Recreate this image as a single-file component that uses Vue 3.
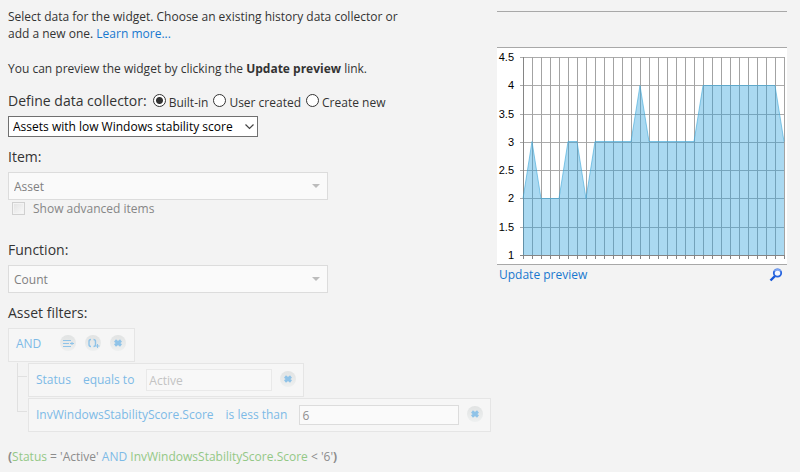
<script setup>
import { ref } from 'vue'

const source = ref('built-in')
const sources = [
  { id: 'built-in', label: 'Built-in' },
  { id: 'user', label: 'User created' },
  { id: 'new', label: 'Create new' },
]
const collector = ref('Assets with low Windows stability score')

const filters = [
  { field: 'Status', operator: 'equals to', value: 'Active', kind: 'pick' },
  { field: 'InvWindowsStabilityScore.Score', operator: 'is less than', value: '6', kind: 'entry' },
]

const values = [
  2, 3, 2, 2, 2, 3, 3, 2, 3, 3, 3, 3, 3, 4, 3,
  3, 3, 3, 3, 3, 4, 4, 4, 4, 4, 4, 4, 4, 4, 3,
]
const left = 26
const step = 9
const rows = [
  { label: '4.5', y: 9 },
  { label: '4', y: 37 },
  { label: '3.5', y: 66 },
  { label: '3', y: 94 },
  { label: '2.5', y: 122 },
  { label: '2', y: 150 },
  { label: '1.5', y: 179 },
  { label: '1', y: 207 },
]
const right = left + step * (values.length - 1)
const top = rows[0].y
const bottom = rows[rows.length - 1].y
const levelY = { 2: 150.5, 3: 93.5, 4: 37.5 }
const line = values.map((v, i) => `${left + i * step},${levelY[v]}`).join(' ')
const area = `${left},${bottom} ${line} ${right},${bottom}`
</script>

<template>
  <main class="page">
    <form class="settings" @submit.prevent>
      <p class="intro">
        Select data for the widget. Choose an existing history data collector or<br />
        add a new one. <a href="#">Learn more...</a>
      </p>
      <p class="intro">You can preview the widget by clicking the <b>Update preview</b> link.</p>

      <div class="sources" role="radiogroup" aria-labelledby="source-title">
        <span id="source-title" class="title">Define data collector:</span>
        <label v-for="s in sources" :key="s.id" class="radio">
          <input v-model="source" type="radio" name="source" :value="s.id" />
          <span>{{ s.label }}</span>
        </label>
      </div>
      <div class="picker collector">
        <select v-model="collector" aria-labelledby="source-title">
          <option>Assets with low Windows stability score</option>
        </select>
        <svg width="9" height="6" viewBox="0 0 9 6"><path d="M0.5 0.5 4.5 4.5 8.5 0.5" fill="none" stroke="#444" stroke-width="1.2" /></svg>
      </div>

      <label class="title" for="item">Item:</label>
      <div class="picker wide">
        <select id="item" disabled><option>Asset</option></select>
        <svg width="8" height="4" viewBox="0 0 8 4"><path d="M0 0h8L4 4z" fill="#bcbcbc" /></svg>
      </div>
      <label class="advanced">
        <input type="checkbox" disabled />
        <span>Show advanced items</span>
      </label>

      <label class="title" for="function">Function:</label>
      <div class="picker wide">
        <select id="function" disabled><option>Count</option></select>
        <svg width="8" height="4" viewBox="0 0 8 4"><path d="M0 0h8L4 4z" fill="#bcbcbc" /></svg>
      </div>

      <h2 class="title">Asset filters:</h2>
      <div class="box root">
        <a href="#" class="and">AND</a>
        <button type="button" class="round" aria-label="Add condition">
          <svg width="16" height="16" viewBox="0 0 16 16" fill="none" stroke="#8fc3e8" stroke-width="1">
            <path d="M3 5.5h8M3 8.5h6M3 11.5h8M10 8.5h4M12 7v3" />
          </svg>
        </button>
        <button type="button" class="round" aria-label="Add group">
          <svg width="16" height="16" viewBox="0 0 16 16" fill="none" stroke="#8fc3e8" stroke-width="1.4">
            <path d="M6 4.500Q4 4.500 4 6.500v3Q4 11.500 6 11.500M8.500 4.500Q10.500 4.500 10.500 6.500v3Q10.500 11.500 8.500 11.500" />
            <path d="M12.500 9v4M10.500 11h4" stroke-width="1" />
          </svg>
        </button>
        <button type="button" class="round" aria-label="Remove group">
          <svg width="16" height="16" viewBox="0 0 16 16"><path d="M5 5.500l6 5M11 5.500l-6 5" stroke="#8fc3e8" stroke-width="3" /></svg>
        </button>
      </div>
      <ul class="tree">
        <li v-for="f in filters" :key="f.field">
          <span class="branch"></span>
          <div class="box">
            <a href="#">{{ f.field }}</a>
            <a href="#">{{ f.operator }}</a>
            <input type="text" :class="f.kind" :value="f.value" :aria-label="f.field" disabled />
            <button type="button" class="round" aria-label="Remove condition">
              <svg width="16" height="16" viewBox="0 0 16 16"><path d="M5 5.500l6 5M11 5.500l-6 5" stroke="#8fc3e8" stroke-width="3" /></svg>
            </button>
          </div>
        </li>
      </ul>
      <p class="formula"><b>(</b><i>Status</i> = 'Active' <em>AND</em> <i>InvWindowsStabilityScore.Score</i> &lt; '6'<b>)</b></p>
    </form>

    <section class="preview">
      <header></header>
      <svg class="chart" viewBox="0 0 290 216" role="img" aria-label="Widget preview chart">
        <g shape-rendering="crispEdges" stroke-width="1">
          <path v-for="r in rows" :key="r.label" :d="`M${left - 3} ${r.y + 0.5}H${right + 1}`" stroke="#ababab" />
          <path v-for="(v, i) in values" :key="i" :d="`M${left + i * step + 0.5} ${top}V${bottom + 4}`" stroke="#a3a3a3" />
          <path :d="`M${left + 0.5} ${top}V${bottom + 4}M${left - 3} ${bottom + 0.5}H${right + 1}`" stroke="#858585" />
          <path v-for="(v, i) in values" :key="`t${i}`" :d="`M${left + i * step + 0.5} ${bottom}v4`" stroke="#858585" />
        </g>
        <polygon :points="area" fill="#2a9fdb" fill-opacity="0.4" />
        <polyline :points="line" fill="none" stroke="#3fa9d8" stroke-opacity="0.6" />
        <text v-for="r in rows" :key="`l${r.label}`" x="17" :y="r.y + 4" text-anchor="end">{{ r.label }}</text>
      </svg>
      <footer>
        <a href="#">Update preview</a>
        <a href="#" aria-label="Zoom preview" class="lens">
          <svg width="14" height="14" viewBox="0 0 14 14" fill="none">
            <path d="M6 8 1.500 12.500" stroke="#1557d8" stroke-width="2.400" />
            <circle cx="8.500" cy="5" r="3.700" fill="#f3f7ff" stroke="#2563de" stroke-width="1.800" />
            <path d="M5.500 3.200a3.700 3.700 0 0 1 6 0" stroke="#7da5f2" stroke-width="1.800" />
          </svg>
        </a>
      </footer>
    </section>
  </main>
</template>

<style>
body {
  margin: 0;
  background: #f3f3f3;
}
</style>

<style scoped>
.page {
  display: grid;
  grid-template-columns: minmax(0, 1fr) 290px;
  gap: 6px;
  align-items: start;
  padding: 8px 13px 6px 8px;
  font: 12px/17px "Open Sans", sans-serif;
  color: #333;
}
a {
  color: #1878cf;
  text-decoration: none;
}
.settings {
  display: flex;
  flex-direction: column;
  align-items: flex-start;
}
.intro {
  margin: 0 0 18px;
}
.title {
  margin: 0;
  font-size: 14px;
  font-weight: 400;
  line-height: 20px;
}
.sources {
  display: flex;
  align-items: center;
  margin-top: -9px;
  height: 29px;
  padding-bottom: 1px;
}
.sources .title {
  margin-right: 1px;
}
.radio {
  display: flex;
  align-items: center;
  gap: 3px;
  margin-left: 5px;
}
.radio span {
  padding-top: 3px;
}
.radio input {
  appearance: none;
  box-sizing: border-box;
  width: 13px;
  height: 13px;
  margin: 0;
  border: 1px solid #333;
  border-radius: 50%;
  background: #fff;
}
.radio input:checked {
  background: radial-gradient(circle, #333 3px, #fff 4px);
}
.picker {
  display: grid;
  align-items: center;
}
.picker select,
.picker svg {
  grid-area: 1 / 1;
}
.picker svg {
  justify-self: end;
  pointer-events: none;
}
.picker select {
  appearance: none;
  box-sizing: border-box;
  width: 100%;
  margin: 0;
  border-radius: 0;
  font: inherit;
}
.collector {
  width: 250px;
  margin-bottom: 10px;
}
.collector select {
  height: 21px;
  padding: 0 4px;
  border: 1px solid #707070;
  background: #fff;
  color: #000;
}
.collector svg {
  margin-right: 4px;
}
.wide {
  width: 320px;
  margin-top: 5px;
}
.wide select {
  height: 28px;
  padding: 0 5px;
  border: 1px solid #dcdcdc;
  background: #fafafa;
  color: #808080;
  opacity: 1;
}
.wide svg {
  margin-right: 8px;
}
.advanced {
  display: flex;
  align-items: center;
  gap: 8px;
  margin: 0 0 23px 4px;
  color: #868686;
}
.advanced input {
  appearance: none;
  box-sizing: border-box;
  width: 13px;
  height: 13px;
  margin: 0;
  padding: 1px;
  border: 1px solid #d0d0d0;
  background: linear-gradient(135deg, #e4e4e4, #f7f7f7) content-box #f7f7f7;
}
h2.title {
  margin: 10px 0 5px;
}
.box {
  display: flex;
  align-items: center;
  box-sizing: border-box;
  height: 34px;
  padding: 0 7px;
  border: 1px solid #e5e5e5;
  background: #f6f6f6;
  white-space: nowrap;
}
.box a {
  margin: 0 12px 2px 0;
  color: #7dbae6;
}
.root {
  gap: 9px;
  padding: 0 8px 2px 7px;
}
.box .and {
  margin-right: 10px;
}
.round {
  display: grid;
  flex: none;
  width: 16px;
  height: 16px;
  margin: 0 0 2px;
  padding: 0;
  border: 0;
  border-radius: 50%;
  background: linear-gradient(#e1e3e3, #eef0f0);
}
.box input {
  box-sizing: border-box;
  margin: 0 8px 0 0;
  padding: 0 2px;
  border: 1px solid #dcdcdc;
  border-radius: 0;
  background: #fafafa;
  font: inherit;
  color: #8f8f8f;
}
.box .pick {
  width: 126px;
  height: 22px;
  border-color: #e9e9e9;
  background: #f8f8f8;
  color: #c3c3c3;
}
.box .entry {
  width: 160px;
  height: 20px;
}
.tree {
  margin: 1px 0 0;
  padding: 0 0 0 9px;
  list-style: none;
}
.tree li {
  display: flex;
  gap: 1px;
}
.tree .box {
  margin-bottom: 1px;
}
.branch {
  width: 9px;
  border-left: 1px solid #e0e0e0;
}
.branch::after {
  display: block;
  height: 13px;
  border-bottom: 1px solid #e0e0e0;
  content: "";
}
.tree li:last-child .branch {
  align-self: flex-start;
}
.formula {
  margin: 15px 0 0;
  color: #8c8c8c;
}
.formula i {
  font-style: normal;
  color: #93c886;
}
.formula em {
  font-style: normal;
  color: #7dbae6;
}
.preview {
  margin-top: 3px;
}
.preview header {
  height: 35px;
  border: solid #a8a8a8;
  border-width: 1px 0;
}
.chart {
  display: block;
  width: 100%;
  background: #fff;
  border-bottom: 1px solid #a8a8a8;
}
.chart text {
  font: 11px "Liberation Sans", Arial, sans-serif;
  fill: #000;
}
.preview footer {
  display: flex;
  justify-content: space-between;
  align-items: center;
  padding: 1px 4px 0 2px;
}
.lens svg {
  display: block;
}
</style>
